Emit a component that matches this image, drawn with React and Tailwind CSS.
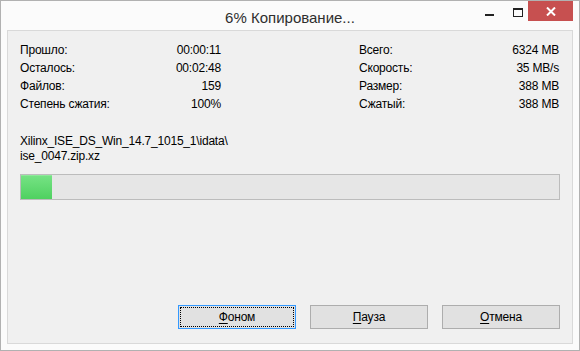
import React from 'react';

const left = [
  ['Прошло:', '00:00:11'],
  ['Осталось:', '00:02:48'],
  ['Файлов:', '159'],
  ['Степень сжатия:', '100%'],
];

const right = [
  ['Всего:', '6324 MB'],
  ['Скорость:', '35 MB/s'],
  ['Размер:', '388 MB'],
  ['Сжатый:', '388 MB'],
];

const Btn = ({ first, rest, focused }) => (
  <button
    className={
      'w-[118px] h-[24px] bg-[#e1e1e1] text-[12px] text-black flex items-center justify-center border ' +
      (focused ? 'border-[#3399ff] p-[1px]' : 'border-[#adadad]')
    }
  >
    {focused ? (
      <span className="w-full h-full border border-dotted border-black flex items-center justify-center">
        <span className="underline underline-offset-2">{first}</span>
        {rest}
      </span>
    ) : (
      <>
        <span className="underline underline-offset-2">{first}</span>
        {rest}
      </>
    )}
  </button>
);

const App = () => {
  return (
    <div
      className="w-[580px] h-[351px] border border-[#b1b1b1] bg-[#fbfbfb] flex flex-col"
      style={{ fontFamily: '"Liberation Sans", Arial, sans-serif' }}
    >
      {/* Title bar */}
      <div className="h-[29px] relative flex justify-end">
        <div className="absolute inset-x-0 top-[6px] text-center text-[15px] text-[#2e2e2e]">
          6% Копирование...
        </div>
        <div className="relative flex items-start">
          <div className="w-[9px] h-[2px] bg-[#222] mt-[13px]" />
          <div className="w-[10px] h-[9px] border border-[#222] border-t-2 mt-[7px] ml-[19px]" />
          <div className="w-[45px] h-[20px] bg-[#c75050] flex items-center justify-center ml-[5px] mr-[6px]">
            <svg width="10" height="9" viewBox="0 0 10 9">
              <path d="M1 0.5 L9 8.5 M9 0.5 L1 8.5" stroke="#fff" strokeWidth="2" />
            </svg>
          </div>
        </div>
      </div>

      {/* Client area */}
      <div className="flex-1 mx-[6px] mb-[6px] border border-[#d9d9d9] bg-[#f0f0f0] flex flex-col pl-[12px] pr-[12px] pt-[10px] pb-[14px] text-[12px] text-black tracking-[-0.2px]">
        <div className="flex">
          <div className="w-[201px] flex flex-col">
            {left.map(([k, v]) => (
              <div key={k} className="h-[18px] flex justify-between items-center">
                <span>{k}</span>
                <span>{v}</span>
              </div>
            ))}
          </div>
          <div className="w-[200px] ml-[138px] flex flex-col">
            {right.map(([k, v]) => (
              <div key={k} className="h-[18px] flex justify-between items-center">
                <span>{k}</span>
                <span>{v}</span>
              </div>
            ))}
          </div>
        </div>

        <div className="mt-[21px] leading-[15px]">
          Xilinx_ISE_DS_Win_14.7_1015_1\idata\
          <br />
          ise_0047.zip.xz
        </div>

        <div className="mt-[10px] w-[540px] h-[26px] border border-[#bcbcbc] bg-[#e6e6e6] flex">
          <div className="w-[31px] h-full bg-gradient-to-b from-[#74e283] to-[#4fd160] border-t border-[#8ee99a]" />
        </div>

        <div className="mt-auto flex justify-end gap-[14px]">
          <Btn first="Ф" rest="оном" focused />
          <Btn first="П" rest="ауза" />
          <Btn first="О" rest="тмена" />
        </div>
      </div>
    </div>
  );
};

export default App;
